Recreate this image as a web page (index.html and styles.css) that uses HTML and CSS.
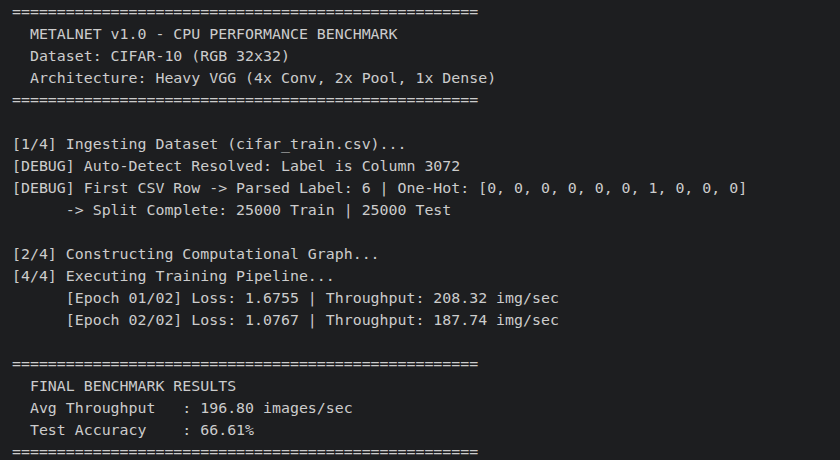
FILE: index.html
```html
<!DOCTYPE html>
<html lang="en">
<head>
<meta charset="utf-8">
<title>METALNET Benchmark</title>
<link rel="stylesheet" href="styles.css">
</head>
<body>
<pre class="terminal">====================================================
  METALNET v1.0 - CPU PERFORMANCE BENCHMARK
  Dataset: CIFAR-10 (RGB 32x32)
  Architecture: Heavy VGG (4x Conv, 2x Pool, 1x Dense)
====================================================

[1/4] Ingesting Dataset (cifar_train.csv)...
[DEBUG] Auto-Detect Resolved: Label is Column 3072
[DEBUG] First CSV Row -> Parsed Label: 6 | One-Hot: [0, 0, 0, 0, 0, 0, 1, 0, 0, 0]
      -> Split Complete: 25000 Train | 25000 Test

[2/4] Constructing Computational Graph...
[4/4] Executing Training Pipeline...
      [Epoch 01/02] Loss: 1.6755 | Throughput: 208.32 img/sec
      [Epoch 02/02] Loss: 1.0767 | Throughput: 187.74 img/sec

====================================================
  FINAL BENCHMARK RESULTS
  Avg Throughput   : 196.80 images/sec
  Test Accuracy    : 66.61%
====================================================</pre>
</body>
</html>
```
FILE: styles.css
```css
html, body {
  margin: 0;
  height: 100%;
  background: #1d1e20;
  overflow: hidden;
}
.terminal {
  margin: 0;
  padding: 1px 0 0 12px;
  font-family: "DejaVu Sans Mono", "Liberation Mono", monospace;
  font-size: 14.9px;
  line-height: 22px;
  color: #cccccc;
  white-space: pre;
}
```
